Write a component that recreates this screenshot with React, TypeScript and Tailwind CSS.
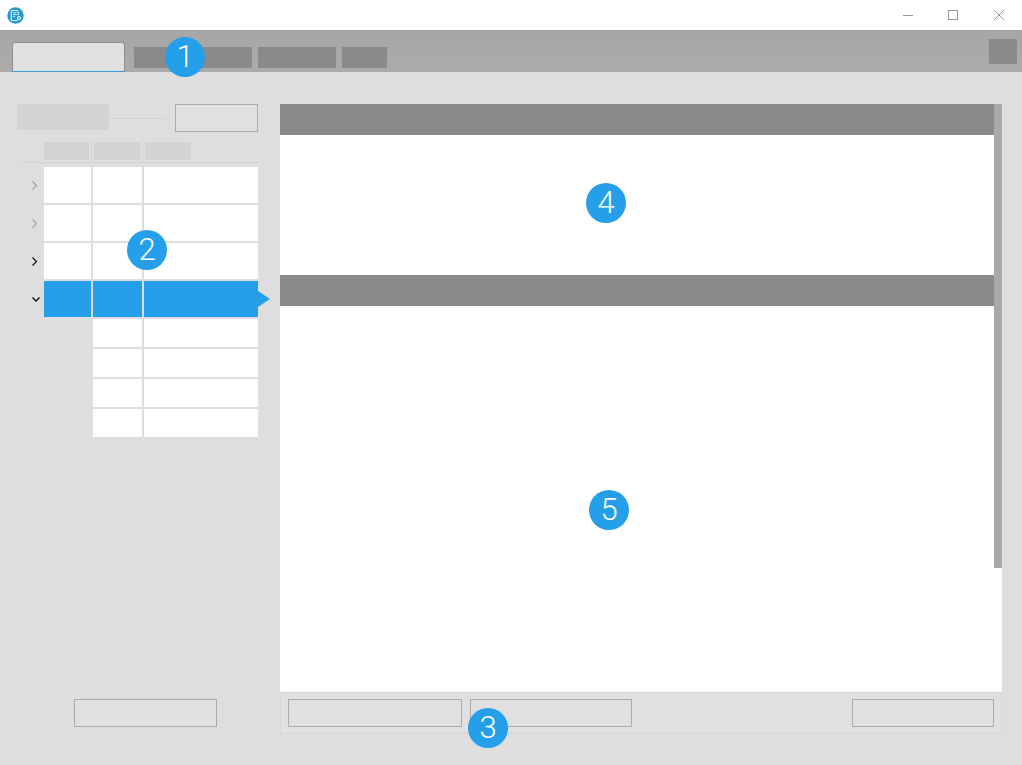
const Badge = ({ n, cls }: { n: number; cls: string }) => (
  <div className={`absolute w-[40px] h-[40px] rounded-full bg-[#259fea] text-white flex items-center justify-center text-[31px] font-light font-['Roboto',sans-serif] ${cls}`}>
    {n}
  </div>
);

const Chevron = ({ color }: { color: string }) => (
  <svg width="24" height="36" viewBox="0 0 24 36" fill="none">
    <path d="M12.5 14.5 L16.5 18.5 L12.5 22.5" stroke={color} strokeWidth="1.2" />
  </svg>
);

const ChevronDown = () => (
  <svg width="24" height="36" viewBox="0 0 24 36" fill="none">
    <path d="M12.5 16.5 L16 20 L19.5 16.5" stroke="#111" strokeWidth="1.4" />
  </svg>
);

const Row = ({ icon, active }: { icon: React.ReactNode; active?: boolean }) => {
  const bg = active ? "bg-[#259fea]" : "bg-white";
  return (
    <div className="relative flex h-[36px] mb-[2px]">
      <div className="w-[24px] h-[36px]">{icon}</div>
      <div className={`w-[47px] ${bg}`} />
      <div className={`w-[49px] ml-[2px] ${bg}`} />
      <div className={`w-[114px] ml-[2px] ${bg}`} />
      {active && (
        <div className="absolute left-[238px] top-[10px] w-0 h-0 border-y-[8px] border-y-transparent border-l-[12px] border-l-[#259fea]" />
      )}
    </div>
  );
};

const SubRow = () => (
  <div className="flex h-[28px] mb-[2px] pl-[73px]">
    <div className="w-[49px] bg-white" />
    <div className="w-[114px] ml-[2px] bg-white" />
  </div>
);

const Outline = ({ cls }: { cls: string }) => (
  <div className={`h-[28px] bg-[#e0e0e0] border border-[#a9abad] ${cls}`} />
);

export default function App() {
  return (
    <div className="relative w-[1022px] h-[765px] overflow-hidden bg-[#dedede] flex flex-col">
      {/* Title bar */}
      <div className="h-[30px] bg-white flex items-center shrink-0">
        <svg className="ml-[7px]" width="17" height="17" viewBox="0 0 17 17" fill="none">
          <circle cx="8.5" cy="8.5" r="8.2" fill="#1f9ad6" />
          <rect x="4.2" y="3.5" width="7" height="10" rx="0.8" stroke="#fff" strokeWidth="1" />
          <path d="M5.8 5.8h3.8M5.8 7.6h3.8M5.8 9.4h2.2" stroke="#fff" strokeWidth="0.8" />
          <circle cx="12" cy="11" r="2.7" fill="#1f9ad6" />
          <circle cx="12" cy="11" r="1.5" stroke="#fff" strokeWidth="1.1" />
        </svg>
        <div className="ml-auto flex items-center">
          <svg width="12" height="12" viewBox="0 0 12 12" fill="none">
            <path d="M1 6.5H11" stroke="#999" strokeWidth="1" />
          </svg>
          <svg className="ml-[33px]" width="12" height="12" viewBox="0 0 12 12" fill="none">
            <rect x="1.5" y="1.5" width="9" height="9" stroke="#999" strokeWidth="1" />
          </svg>
          <svg className="ml-[34px] mr-[17px]" width="12" height="12" viewBox="0 0 12 12" fill="none">
            <path d="M1 1L11 11M11 1L1 11" stroke="#999" strokeWidth="1" />
          </svg>
        </div>
      </div>

      {/* Tab bar */}
      <div className="relative h-[42px] shrink-0 bg-gradient-to-b from-[#a6a6a6] to-[#ababab] flex items-end pl-[12px]">
        <div className="w-[113px] h-[30px] rounded-t-[3px] bg-[#e0e0e0] border border-[#8f8f8f] border-b-[#3a9bdc]" />
        <div className="w-[118px] h-[21px] ml-[9px] mb-[4px] bg-[#8a8a8a]" />
        <div className="w-[78px] h-[21px] ml-[6px] mb-[4px] bg-[#8a8a8a]" />
        <div className="w-[45px] h-[21px] ml-[6px] mb-[4px] bg-[#8a8a8a]" />
        <div className="ml-auto mr-[5px] mb-[8px] w-[28px] h-[25px] bg-[#8a8a8a]" />
      </div>

      {/* Body */}
      <div className="flex-1 flex pt-[32px]">
        {/* Left panel */}
        <div className="w-[280px] shrink-0 flex flex-col">
          <div className="flex items-start h-[28px] pl-[17px]">
            <div className="w-[92px] h-[26px] bg-[#d3d3d3]" />
            <div className="w-[58px] h-px mt-[14px] bg-[#d3d3d3]" />
            <Outline cls="w-[83px] ml-[8px]" />
          </div>
          <div className="mt-[8px] ml-[20px] w-[238px] h-[23px] border-b border-[#d3d3d3] flex items-start pl-[24px]">
            <div className="w-[45px] h-[18px] mt-[2px] bg-[#d3d3d3]" />
            <div className="w-px h-[22px] ml-[2px] bg-[#d6d6d6]" />
            <div className="w-[46px] h-[18px] mt-[2px] ml-[2px] bg-[#d3d3d3]" />
            <div className="w-px h-[22px] ml-[2px] bg-[#d6d6d6]" />
            <div className="w-[46px] h-[18px] mt-[2px] ml-[2px] bg-[#d3d3d3]" />
          </div>
          <div className="mt-[4px] ml-[20px] w-[238px]">
            <Row icon={<Chevron color="#a3a3a3" />} />
            <Row icon={<Chevron color="#a3a3a3" />} />
            <Row icon={<Chevron color="#111" />} />
            <Row icon={<ChevronDown />} active />
            <SubRow />
            <SubRow />
            <SubRow />
            <SubRow />
          </div>
          <Outline cls="w-[143px] ml-[74px] mt-auto mb-[38px]" />
        </div>

        {/* Right panel */}
        <div className="w-[722px] flex flex-col mb-[31px]">
          <div className="relative flex-1 flex flex-col bg-white">
            <div className="h-[31px] bg-[#8a8a8a] mr-[8px] shrink-0" />
            <div className="h-[140px] shrink-0" />
            <div className="h-[31px] bg-[#8a8a8a] mr-[8px] shrink-0" />
            <div className="absolute right-0 top-0 w-[8px] h-[464px] bg-[#a9a9a9]" />
          </div>
          <div className="h-[42px] shrink-0 bg-[#e0e0e0] border border-[#d8d8d8] border-t-[#d2d2d2] flex items-start pt-[6px] pl-[7px]">
            <Outline cls="w-[174px]" />
            <Outline cls="w-[162px] ml-[8px]" />
            <Outline cls="w-[142px] ml-auto mr-[7px]" />
          </div>
        </div>
      </div>

      <Badge n={1} cls="left-[165px] top-[37px]" />
      <Badge n={2} cls="left-[127px] top-[230px]" />
      <Badge n={3} cls="left-[468px] top-[708px]" />
      <Badge n={4} cls="left-[586px] top-[183px]" />
      <Badge n={5} cls="left-[589px] top-[490px]" />
    </div>
  );
}
